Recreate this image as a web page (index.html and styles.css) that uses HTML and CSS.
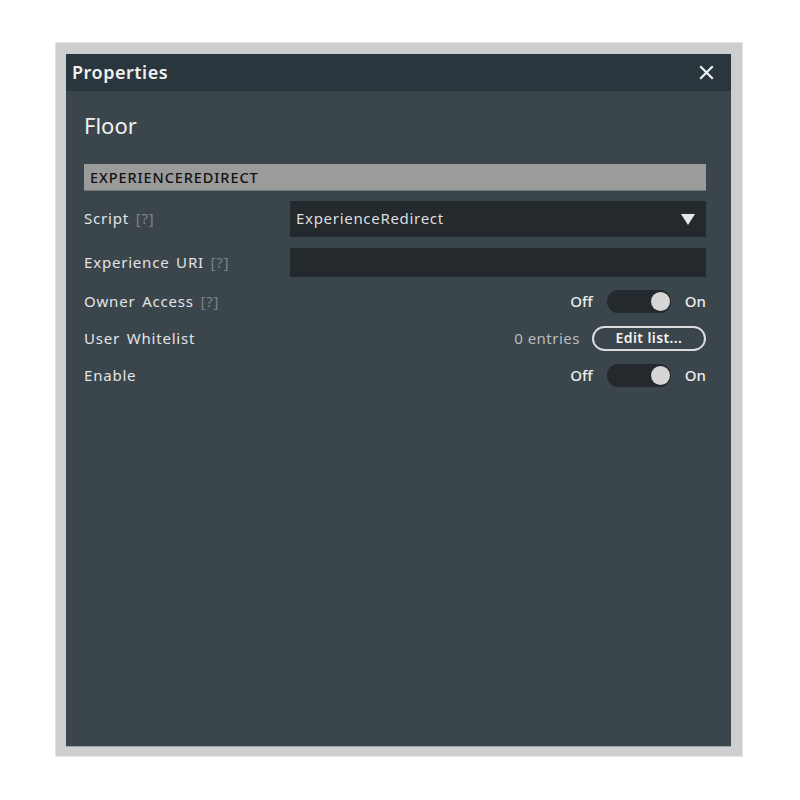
FILE: index.html
```html
<!DOCTYPE html>
<html>
<head>
<meta charset="utf-8">
<link rel="stylesheet" href="styles.css">
</head>
<body>
<div class="frame">
  <div class="panel">
    <div class="header">
      <span class="title">Properties</span>
      <svg class="close" width="15" height="15" viewBox="0 0 15 15"><path d="M2 2 L13 13 M13 2 L2 13" stroke="#f2f2f2" stroke-width="2.2" stroke-linecap="square"/></svg>
    </div>
    <div class="body">
      <div class="heading">Floor</div>
      <div class="section">EXPERIENCEREDIRECT</div>
      <div class="row row-script">
        <div class="label">Script <span class="help">[?]</span></div>
        <div class="select">
          <span>ExperienceRedirect</span>
          <svg width="14" height="11" viewBox="0 0 14 11"><path d="M0 0 H14 L7 11 Z" fill="#e8e8e8"/></svg>
        </div>
      </div>
      <div class="row row-uri">
        <div class="label">Experience URI <span class="help">[?]</span></div>
        <div class="input"></div>
      </div>
      <div class="row row-toggle">
        <div class="label">Owner Access <span class="help">[?]</span></div>
        <div class="right">
          <span class="opt">Off</span>
          <span class="track"><span class="knob"></span></span>
          <span class="opt">On</span>
        </div>
      </div>
      <div class="row row-list">
        <div class="label">User Whitelist</div>
        <div class="right">
          <span class="count">0 entries</span>
          <span class="btn">Edit list...</span>
        </div>
      </div>
      <div class="row row-toggle">
        <div class="label">Enable</div>
        <div class="right">
          <span class="opt">Off</span>
          <span class="track"><span class="knob"></span></span>
          <span class="opt">On</span>
        </div>
      </div>
    </div>
  </div>
</div>
</body>
</html>
```
FILE: styles.css
```css
html, body {
  margin: 0;
  padding: 0;
  background: #ffffff;
}
body {
  font-family: "Noto Sans", "Open Sans", sans-serif;
  color: #e8e8e8;
}
.frame {
  box-sizing: border-box;
  margin: 42px 0 0 55px;
  width: 688px;
  height: 715px;
  padding: 11px 11px 10px 10px;
  background: #cdcecf;
  border: 1px solid #e3e3e3;
}
.panel {
  height: 100%;
  display: flex;
  flex-direction: column;
  background: #3a454c;
  box-shadow: 0 1px 0 #9ea3a6;
}
.header {
  height: 37px;
  flex: none;
  background: #2a363e;
  display: flex;
  align-items: center;
  justify-content: space-between;
  padding: 0 17px 0 6px;
}
.title {
  font-size: 18px;
  font-weight: 600;
  color: #f0f0f0;
  letter-spacing: 0.5px;
  margin-top: -2px;
}
.close {
  display: block;
}
.body {
  padding: 0 25px 0 18px;
  display: flex;
  flex-direction: column;
}
.heading {
  font-size: 22px;
  color: #f0f0f0;
  height: 30px;
  line-height: 30px;
  margin-top: 19px;
  margin-bottom: 24px;
}
.section {
  height: 26px;
  line-height: 27px;
  background: #9b9b9b;
  color: #111111;
  font-size: 14.5px;
  font-weight: 500;
  letter-spacing: 0.9px;
  padding-left: 6px;
  box-shadow: 0 1px 0 #6e7478;
}
.row {
  display: flex;
  align-items: center;
}
.label {
  width: 206px;
  flex: none;
  font-size: 15px;
  color: #e4e4e4;
  letter-spacing: 0.8px;
  word-spacing: 2px;
  margin-top: -2px;
}
.help {
  color: #7c8388;
}
.row-script {
  margin-top: 11px;
  height: 36px;
}
.select {
  flex: 1;
  height: 36px;
  background: #23292d;
  display: flex;
  align-items: center;
  justify-content: space-between;
  padding: 0 11px 0 6px;
  font-size: 15px;
  letter-spacing: 0.7px;
  color: #dedede;
}
.select span {
  margin-top: -2px;
}
.select svg {
  display: block;
}
.row-uri {
  margin-top: 11px;
  height: 29px;
}
.input {
  flex: 1;
  height: 29px;
  background: #23292d;
}
.right {
  flex: 1;
  display: flex;
  justify-content: flex-end;
  align-items: center;
}
.row-toggle {
  margin-top: 13px;
  height: 23px;
}
.opt {
  font-size: 15px;
  font-weight: 500;
  color: #eeeeee;
  margin-top: -2px;
}
.track {
  width: 64px;
  height: 23px;
  border-radius: 12px;
  background: #23292d;
  margin: 0 14px;
  display: flex;
  align-items: center;
  justify-content: flex-end;
  padding-right: 1px;
  box-sizing: border-box;
}
.knob {
  width: 19px;
  height: 19px;
  border-radius: 50%;
  background: #d6d6d6;
}
.row-list {
  margin-top: 13px;
  height: 25px;
}
.count {
  font-size: 15px;
  color: #b9bcbe;
  letter-spacing: 0.5px;
  margin-right: 12px;
  margin-top: -2px;
}
.btn {
  box-sizing: border-box;
  width: 114px;
  height: 25px;
  border: 2px solid #dcdcdc;
  border-radius: 13px;
  display: flex;
  align-items: center;
  justify-content: center;
  font-size: 14px;
  font-weight: 600;
  letter-spacing: 0.4px;
  color: #f2f2f2;
  padding-bottom: 2px;
}
```
